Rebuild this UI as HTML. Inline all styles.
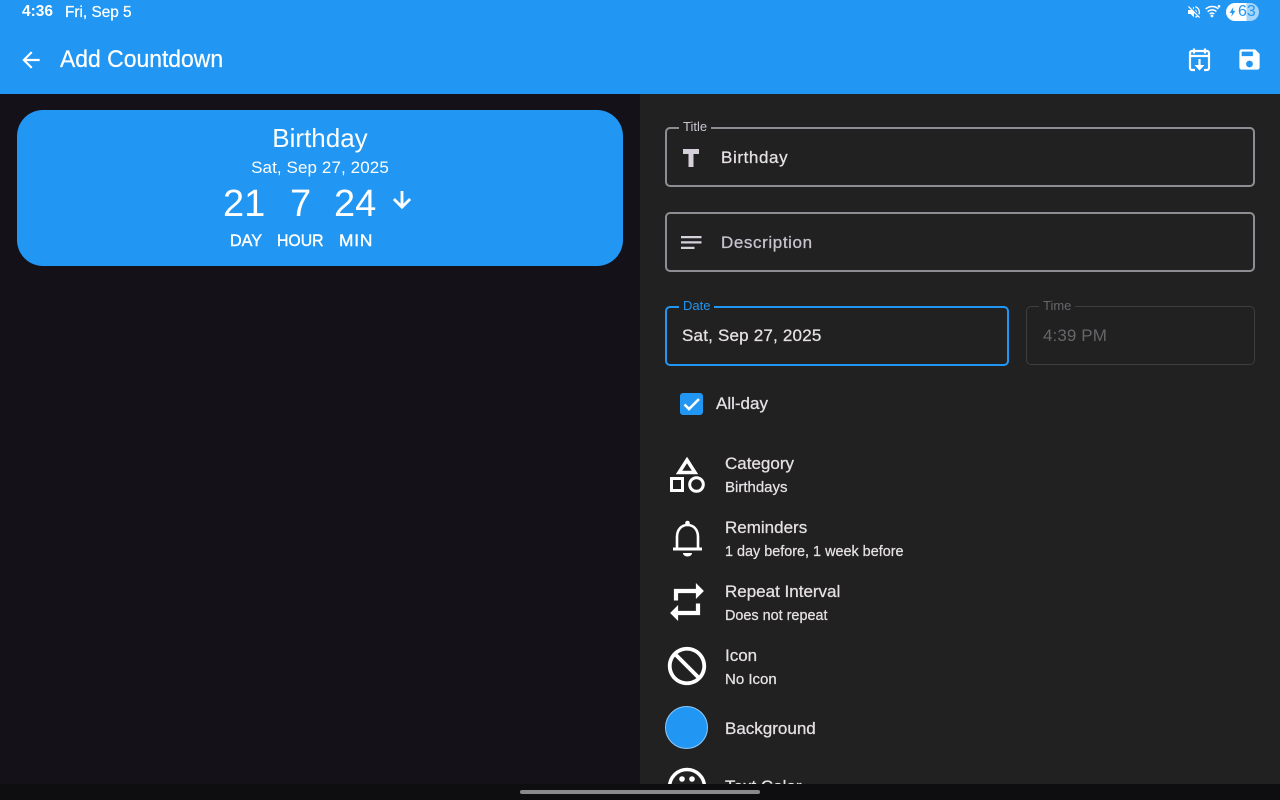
<!DOCTYPE html>
<html>
<head>
<meta charset="utf-8">
<style>
html,body{margin:0;padding:0;width:1280px;height:800px;overflow:hidden;background:#141218;}
body{position:relative;font-family:"Liberation Sans",sans-serif;}
.a{position:absolute;}
.t{position:absolute;white-space:nowrap;line-height:1;transform-origin:left;}
svg{position:absolute;display:block;}
.box{position:absolute;box-sizing:border-box;border-radius:5px;}
.lab{position:absolute;background:#212121;padding:0 4px;font-size:13px;line-height:14px;white-space:nowrap;}
.m{-webkit-text-stroke:.25px currentColor;}
</style>
</head>
<body>
<div class="a" style="left:0;top:0;width:1280px;height:94px;background:#2196f3"></div>
<div class="a" style="left:640px;top:94px;width:640px;height:690px;background:#212121"></div>

<div class="t" style="left:22px;top:4px;font-size:16px;color:#fff;font-weight:bold;transform:scaleX(.97)">4:36</div>
<div class="t m" style="left:65px;top:5px;font-size:16px;color:#fff;transform:scaleX(.96)">Fri, Sep 5</div>

<svg style="left:1186px;top:4px" width="16" height="16" viewBox="0 0 24 24" fill="#fff"><path d="M16.500 12c0-1.770-1-3.290-2.500-4.030v2.210l2.450 2.450c.03-.2.05-.41.05-.63zM19 12c0 .94-.2 1.820-.54 2.640l1.510 1.510C20.630 14.910 21 13.500 21 12c0-4.280-2.990-7.860-7-8.770v2.060c2.890.86 5 3.540 5 6.710zM4.270 3L3 4.270 7.730 9H3v6h4l5 5v-6.730l4.250 4.250c-.67.52-1.420.93-2.250 1.180v2.060c1.380-.31 2.630-.95 3.690-1.810L19.730 21 21 19.730l-9-9L4.270 3zM12 4L9.910 6.090 12 8.180V4z"/></svg>
<svg style="left:1205px;top:4px" width="16" height="14" viewBox="0 0 24 20" fill="none" stroke="#fff" stroke-width="2.200"><path d="M1 7c6-5 14-5 19 0M4 11c4-3.500 10-3.500 13 0M7 14.500c2.500-2 5-2 7 0"/><circle cx="10.500" cy="17.500" r="1" fill="#fff"/><circle cx="21" cy="3" r="2" fill="#fff" stroke="none"/></svg>
<div class="a" style="left:1226px;top:3px;width:33px;height:18px;border-radius:9px;background:linear-gradient(90deg,#fff 0,#fff 62%,#a6d5fa 62%,#a6d5fa 100%)"></div>
<svg style="left:1228px;top:6px" width="9" height="12" viewBox="0 0 11 12" fill="#2196f3"><path d="M6.500 0L2 7h3l-1 5 5-7.500H6z"/></svg>
<div class="t" style="left:1238px;top:4px;font-size:16px;color:#2196f3">63</div>

<svg style="left:18px;top:47px" width="26" height="26" viewBox="0 0 24 24" fill="#fff"><path d="M20 11H7.830l5.590-5.590L12 4l-8 8 8 8 1.410-1.410L7.830 13H20v-2z"/></svg>
<div class="t m" style="left:60px;top:48px;font-size:24px;color:#fff;transform:scaleX(.955)">Add Countdown</div>

<svg style="left:1186px;top:46px" width="27" height="27" viewBox="0 0 27 27" fill="none" stroke="#fff" stroke-width="2.200"><path d="M9 24H6a2 2 0 0 1-2-2V7a2 2 0 0 1 2-2h15a2 2 0 0 1 2 2v15a2 2 0 0 1-2 2h-3"/><path d="M8 2.500v5M19 2.500v5M4 10h19" /><path d="M13.500 13v8" /><path d="M8.500 19h10l-5 5.500z" fill="#fff" stroke="none"/></svg>
<svg style="left:1236px;top:46px" width="27" height="27" viewBox="0 0 24 24" fill="#fff"><path d="M17 3H5c-1.110 0-2 .9-2 2v14c0 1.100.89 2 2 2h14c1.100 0 2-.9 2-2V7l-4-4zm-5 16c-1.660 0-3-1.340-3-3s1.340-3 3-3 3 1.340 3 3-1.340 3-3 3zm3-10H5V5h10v4z"/></svg>

<!-- Card -->
<div class="a" style="left:17px;top:110px;width:606px;height:156px;border-radius:26px;background:#2196f3"></div>
<div class="t" style="left:17px;width:606px;text-align:center;top:125px;font-size:26px;color:#fff;">Birthday</div>
<div class="t" style="left:17px;width:606px;text-align:center;top:159px;font-size:17px;letter-spacing:.1px;color:#fff;">Sat, Sep 27, 2025</div>
<div class="t" style="left:223px;top:185px;font-size:38px;color:#fff;">21</div>
<div class="t" style="left:290px;top:185px;font-size:38px;color:#fff;">7</div>
<div class="t" style="left:334px;top:185px;font-size:38px;color:#fff;">24</div>
<svg style="left:389px;top:187px" width="26" height="26" viewBox="0 0 24 24" fill="#fff" stroke="#fff" stroke-width=".6"><path d="M20 12l-1.410-1.410L13 16.170V4h-2v12.170l-5.580-5.590L4 12l8 8 8-8z"/></svg>
<div class="t" style="left:230px;top:232px;font-size:17px;color:#fff;-webkit-text-stroke:.4px #fff;transform:scaleX(.95)">DAY</div>
<div class="t" style="left:277px;top:232px;font-size:17px;color:#fff;-webkit-text-stroke:.4px #fff;transform:scaleX(.93)">HOUR</div>
<div class="t" style="left:339px;top:232px;font-size:17px;letter-spacing:.8px;color:#fff;-webkit-text-stroke:.4px #fff;transform:scaleX(1.02)">MIN</div>

<!-- Title -->
<div class="box" style="left:665px;top:127px;width:590px;height:60px;border:2px solid #8f8d94"></div>
<div class="lab" style="left:679px;top:120px;color:#cac4d0">Title</div>
<svg style="left:665px;top:140px" width="52" height="34" viewBox="0 0 52 34" fill="#d5d0da"><path d="M18 9h16v5h-5.500v13h-5V14H18z"/></svg>
<div class="t m" style="left:721px;top:149px;font-size:17px;letter-spacing:.6px;color:#e6e1e5;">Birthday</div>

<!-- Description -->
<div class="box" style="left:665px;top:212px;width:590px;height:60px;border:2px solid #8f8d94"></div>
<svg style="left:681px;top:235px" width="21" height="15" viewBox="0 0 21 15" fill="#d5d0da"><path d="M0 1h20.500v2.200H0zM0 6.300h20.500v2.200H0zM0 11.800h13.500V14H0z"/></svg>
<div class="t m" style="left:721px;top:234px;font-size:17px;letter-spacing:.6px;color:#cac4d0;">Description</div>

<!-- Date -->
<div class="box" style="left:665px;top:306px;width:344px;height:60px;border:2.500px solid #2196f3"></div>
<div class="lab" style="left:679px;top:299px;color:#2196f3">Date</div>
<div class="t m" style="left:682px;top:327px;font-size:17px;letter-spacing:.2px;color:#e6e1e5;">Sat, Sep 27, 2025</div>

<!-- Time -->
<div class="box" style="left:1026px;top:306px;width:229px;height:59px;border:1.500px solid #3e3d40"></div>
<div class="lab" style="left:1039px;top:299px;color:#676569">Time</div>
<div class="t" style="left:1043px;top:327px;font-size:17px;letter-spacing:.1px;color:#676569;">4:39 PM</div>

<!-- All-day -->
<div class="a" style="left:680px;top:393px;width:23px;height:22px;border-radius:3px;background:#2196f3"></div>
<svg style="left:680px;top:393px" width="23" height="22" viewBox="0 0 23 22" fill="none" stroke="#fff" stroke-width="2.600"><path d="M4.500 11.500l4.500 4.500L19 6"/></svg>
<div class="t m" style="left:716px;top:395px;font-size:17px;color:#e6e1e5;">All-day</div>

<!-- Rows -->
<svg style="left:665px;top:453px" width="44" height="44" viewBox="0 0 44 44" fill="none" stroke="#fff" stroke-width="3"><path d="M22 7l8 12.500H14z" stroke-width="3.500"/><rect x="6.500" y="25.500" width="11" height="12"/><circle cx="31.500" cy="31.500" r="6.800"/></svg>
<div class="t m" style="left:725px;top:455px;font-size:17px;color:#e6e1e5;">Category</div>
<div class="t m" style="left:725px;top:480px;font-size:15px;color:#e6e1e5;">Birthdays</div>

<svg style="left:665px;top:517px" width="44" height="44" viewBox="0 0 44 44" fill="none" stroke="#fff" stroke-width="2.600"><path d="M12 32V20C12 12.500 16.500 8 22.500 8S33 12.500 33 20v12"/><path d="M8 32h29" stroke-width="3"/><circle cx="22.500" cy="6" r="2.300" fill="#fff" stroke="none"/><path d="M18 36h9c0 2-2 3.500-4.500 3.500S18 38 18 36z" fill="#fff" stroke="none"/></svg>
<div class="t m" style="left:725px;top:519px;font-size:17px;color:#e6e1e5;">Reminders</div>
<div class="t m" style="left:725px;top:544px;font-size:15px;color:#e6e1e5;transform:scaleX(.96)">1 day before, 1 week before</div>

<svg style="left:665px;top:580px" width="44" height="44" viewBox="0 0 24 24" fill="#fff" stroke="#fff" stroke-width=".3"><path d="M7 7h10v3l4-4-4-4v3H5v6h2V7zm10 10H7v-3l-4 4 4 4v-3h12v-6h-2v4z"/></svg>
<div class="t m" style="left:725px;top:583px;font-size:17px;color:#e6e1e5;">Repeat Interval</div>
<div class="t m" style="left:725px;top:608px;font-size:15px;color:#e6e1e5;transform:scaleX(.96)">Does not repeat</div>

<svg style="left:664px;top:643px;transform:scaleX(-1)" width="46" height="46" viewBox="0 0 24 24" fill="#fff"><path d="M12 2C6.480 2 2 6.480 2 12s4.480 10 10 10 10-4.480 10-10S17.520 2 12 2zM4 12c0-4.420 3.580-8 8-8 1.850 0 3.550.63 4.900 1.690L5.690 16.900C4.630 15.550 4 13.850 4 12zm8 8c-1.850 0-3.550-.63-4.900-1.690L18.310 7.100C19.370 8.450 20 10.150 20 12c0 4.420-3.580 8-8 8z"/></svg>
<div class="t m" style="left:725px;top:647px;font-size:17px;color:#e6e1e5;">Icon</div>
<div class="t m" style="left:725px;top:672px;font-size:15px;color:#e6e1e5;">No Icon</div>

<div class="a" style="left:665px;top:706px;width:43px;height:43px;box-sizing:border-box;border-radius:50%;background:#2196f3;border:1px solid #90caf9"></div>
<div class="t m" style="left:725px;top:720px;font-size:17px;color:#e6e1e5;">Background</div>

<svg style="left:666px;top:766px" width="42" height="42" viewBox="0 0 42 42" fill="none" stroke="#fff" stroke-width="3.500"><circle cx="21" cy="21" r="17.500"/><circle cx="16" cy="13" r="2.800" fill="#fff" stroke="none"/><circle cx="26" cy="13" r="2.800" fill="#fff" stroke="none"/></svg>
<div class="t m" style="left:725px;top:778px;font-size:17px;color:#e6e1e5;">Text Color</div>

<!-- Nav bar -->
<div class="a" style="left:0;top:784px;width:1280px;height:16px;background:#0e0d10"></div>
<div class="a" style="left:520px;top:790px;width:240px;height:4px;border-radius:2px;background:#8a898c"></div>
</body>
</html>
